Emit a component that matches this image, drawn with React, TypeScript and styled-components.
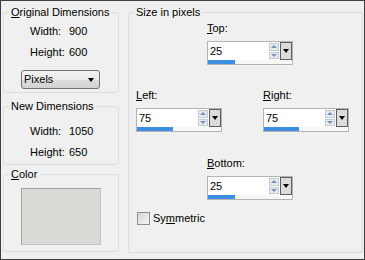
import React from "react";
import styled, { createGlobalStyle } from "styled-components";

const Global = createGlobalStyle`
  html, body { margin: 0; padding: 0; background: #f0f0f0; }
  body { font-family: "Liberation Sans", Arial, sans-serif; font-size: 11px; color: #000; }
`;

const Dialog = styled.div`
  box-sizing: border-box;
  width: 365px;
  height: 260px;
  border: 1px solid #3f3f3f;
  background: #f0f0f0;
  display: flex;
  align-items: flex-start;
  gap: 9px;
  padding: 5px 1px 0 2px;
  font-family: "Liberation Sans", Arial, sans-serif;
  font-size: 11px;
  line-height: 13px;
  color: #000;
`;

const LeftColumn = styled.div`
  width: 116px;
  display: flex;
  flex-direction: column;
`;

const Group = styled.fieldset<{ $mt?: number; $h?: number }>`
  box-sizing: border-box;
  margin: ${(p) => p.$mt ?? 0}px 0 0 0;
  padding: 0;
  min-width: 0;
  border: 1px solid #d5dfe5;
  border-radius: 3px;
  ${(p) => (p.$h ? `height: ${p.$h}px;` : "")}
`;

const Legend = styled.legend`
  margin-left: 5px;
  padding: 0 2px;
  font-size: 11px;
  line-height: 13px;
`;

const GroupBody = styled.div<{ $pt: number; $pb: number }>`
  display: flex;
  flex-direction: column;
  align-items: flex-start;
  padding: ${(p) => p.$pt}px 0 ${(p) => p.$pb}px 0;
`;

const InfoGrid = styled.div`
  display: grid;
  grid-template-columns: 39px auto;
  row-gap: 8px;
  margin-left: 26px;
  line-height: 13px;
`;

const Select = styled.div`
  box-sizing: border-box;
  margin: 11px 0 0 17px;
  width: 79px;
  height: 19px;
  border: 1px solid #707070;
  border-radius: 3px;
  background: linear-gradient(#f2f2f2, #ebebeb 50%, #dddddd 50%, #d3d3d3);
  display: flex;
  align-items: center;
  justify-content: space-between;
  padding: 0 5px 0 2px;
`;

const Triangle = styled.span<{ $dir: "up" | "down"; $w: number; $h: number; $c: string }>`
  width: 0;
  height: 0;
  border-left: ${(p) => p.$w / 2}px solid transparent;
  border-right: ${(p) => p.$w / 2}px solid transparent;
  ${(p) =>
    p.$dir === "down"
      ? `border-top: ${p.$h}px solid ${p.$c};`
      : `border-bottom: ${p.$h}px solid ${p.$c};`}
`;

const Swatch = styled.div`
  box-sizing: border-box;
  margin-left: 17px;
  width: 80px;
  height: 57px;
  background: #d9d9d6;
  border: 1px solid #a3a3a3;
  border-right-color: #c4c4c4;
  border-bottom-color: #c4c4c4;
`;

const RightBody = styled.div`
  display: flex;
  flex-direction: column;
  align-items: flex-start;
  padding: 3px 0 0 7px;
`;

const Field = styled.div<{ $ml?: number; $mt?: number }>`
  display: flex;
  flex-direction: column;
  align-items: flex-start;
  gap: 6px;
  margin-left: ${(p) => p.$ml ?? 0}px;
  margin-top: ${(p) => p.$mt ?? 0}px;
`;

const FieldRow = styled.div<{ $mt: number }>`
  display: flex;
  gap: 41px;
  margin-top: ${(p) => p.$mt}px;
`;

const Label = styled.span`
  line-height: 13px;
`;

const Key = styled.u`
  text-decoration: underline;
  text-underline-offset: 1px;
`;

const SpinFrame = styled.div`
  box-sizing: border-box;
  width: 86px;
  height: 24px;
  border: 1px solid #b4b4b4;
  background: #f9f9f9;
  display: flex;
  flex-direction: column;
`;

const SpinTop = styled.div`
  display: flex;
  height: 18px;
  background: #fff;
`;

const SpinText = styled.div`
  flex: 1;
  display: flex;
  align-items: center;
  padding-left: 2px;
`;

const Arrows = styled.div`
  width: 10px;
  display: flex;
  flex-direction: column;
  justify-content: center;
  gap: 1px;
  padding: 1px 0;
`;

const ArrowBtn = styled.div`
  box-sizing: border-box;
  height: 8px;
  background: #e6ebf1;
  border: 1px solid #c2cad6;
  display: flex;
  align-items: center;
  justify-content: center;
`;

const DropBtn = styled.div`
  box-sizing: border-box;
  width: 12px;
  margin-left: 1px;
  height: 18px;
  border: 1px solid #5e5e5e;
  background: #dcdcdc;
  display: flex;
  align-items: center;
  justify-content: center;
`;

const Bar = styled.div`
  height: 4px;
  background: #f7f7f7;
`;

const BarFill = styled.div`
  height: 100%;
  background: #3d8fe3;
`;

const CheckRow = styled.label`
  display: flex;
  align-items: center;
  gap: 3px;
  margin: 12px 0 0 1px;
  line-height: 13px;
`;

const CheckBox = styled.span`
  box-sizing: border-box;
  width: 13px;
  height: 13px;
  border: 1px solid #8e8f8f;
  background: linear-gradient(135deg, #d6d6d6, #f4f4f4);
`;

function Spin({ value, fill }: { value: string; fill: number }) {
  return (
    <SpinFrame>
      <SpinTop>
        <SpinText>{value}</SpinText>
        <Arrows>
          <ArrowBtn>
            <Triangle $dir="up" $w={6} $h={3} $c="#7d8fb5" />
          </ArrowBtn>
          <ArrowBtn>
            <Triangle $dir="down" $w={6} $h={3} $c="#7d8fb5" />
          </ArrowBtn>
        </Arrows>
        <DropBtn>
          <Triangle $dir="down" $w={7} $h={4} $c="#000" />
        </DropBtn>
      </SpinTop>
      <Bar>
        <BarFill style={{ width: fill }} />
      </Bar>
    </SpinFrame>
  );
}

export default function App() {
  return (
    <>
      <Global />
      <Dialog>
        <LeftColumn>
          <Group>
            <Legend>
              <Key>O</Key>riginal Dimensions
            </Legend>
            <GroupBody $pt={6} $pb={3}>
              <InfoGrid>
                <span>Width:</span>
                <span>900</span>
                <span>Height:</span>
                <span>600</span>
              </InfoGrid>
              <Select>
                <span>Pixels</span>
                <Triangle $dir="down" $w={7} $h={4} $c="#000" />
              </Select>
            </GroupBody>
          </Group>
          <Group $mt={7}>
            <Legend>New Dimensions</Legend>
            <GroupBody $pt={12} $pb={5}>
              <InfoGrid>
                <span>Width:</span>
                <span>1050</span>
                <span>Height:</span>
                <span>650</span>
              </InfoGrid>
            </GroupBody>
          </Group>
          <Group $mt={3}>
            <Legend>
              <Key>C</Key>olor
            </Legend>
            <GroupBody $pt={7} $pb={6}>
              <Swatch />
            </GroupBody>
          </Group>
        </LeftColumn>
        <Group style={{ width: 235 }} $h={247}>
          <Legend>Size in pixels</Legend>
          <RightBody>
            <Field $ml={71}>
              <Label>
                <Key>T</Key>op:
              </Label>
              <Spin value="25" fill={27} />
            </Field>
            <FieldRow $mt={24}>
              <Field>
                <Label>
                  <Key>L</Key>eft:
                </Label>
                <Spin value="75" fill={36} />
              </Field>
              <Field>
                <Label>
                  <Key>R</Key>ight:
                </Label>
                <Spin value="75" fill={35} />
              </Field>
            </FieldRow>
            <Field $ml={71} $mt={25}>
              <Label>
                <Key>B</Key>ottom:
              </Label>
              <Spin value="25" fill={27} />
            </Field>
            <CheckRow>
              <CheckBox />
              <span>
                Sy<Key>m</Key>metric
              </span>
            </CheckRow>
          </RightBody>
        </Group>
      </Dialog>
    </>
  );
}
